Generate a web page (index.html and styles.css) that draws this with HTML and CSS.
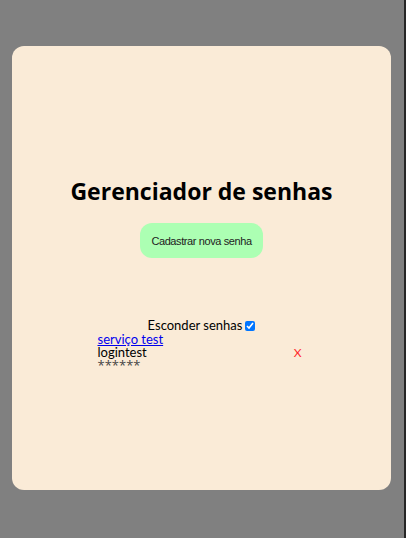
FILE: index.html
```html
<!DOCTYPE html>
<html lang="pt">
<head>
<meta charset="utf-8">
<title>Gerenciador de senhas</title>
<link rel="stylesheet" href="styles.css">
</head>
<body>
<main class="card">
  <h1 class="title">Gerenciador de senhas</h1>
  <button class="add-btn" type="button">Cadastrar nova senha</button>
  <label class="hide-row">Esconder senhas <input type="checkbox" class="hide-check" checked></label>
  <div class="entry">
    <div class="entry-info">
      <a class="entry-link" href="#">serviço test</a>
      <span class="entry-login">logintest</span>
      <span class="entry-pass">******</span>
    </div>
    <span class="entry-remove">X</span>
  </div>
</main>
</body>
</html>
```
FILE: styles.css
```css
html, body {
  margin: 0;
  height: 100%;
}
html {
  background: #808080;
  box-shadow: inset -2px 0 0 #262626;
}
body {
  display: flex;
  align-items: center;
  justify-content: center;
  padding-right: 2px;
  box-sizing: border-box;
  font-family: "Lato", "Open Sans", sans-serif;
}
.card {
  width: 379px;
  height: 444px;
  margin-right: 1px;
  margin-top: -2px;
  background: #faebd7;
  border-radius: 12px;
  display: flex;
  flex-direction: column;
  align-items: center;
  padding-top: 129px;
  box-sizing: border-box;
}
.title {
  margin: 0;
  font-family: "Open Sans", sans-serif;
  font-size: 23px;
  line-height: 32px;
  font-weight: 700;
  color: #000;
}
.add-btn {
  margin-top: 16px;
  width: 123px;
  height: 35px;
  border: none;
  border-radius: 12px;
  background: #acffb3;
  color: #222;
  font-family: "Liberation Sans", Arial, sans-serif;
  font-size: 11px;
  letter-spacing: -0.4px;
  padding: 0;
}
.hide-row {
  margin-top: 61px;
  display: flex;
  align-items: center;
  height: 13px;
  font-size: 13px;
  line-height: 13px;
  color: #000;
}
.hide-check {
  width: 10px;
  height: 10px;
  margin: 0 0 0 3px;
  accent-color: #0075ff;
}
.entry {
  margin-top: 1px;
  width: 208px;
  display: flex;
  justify-content: space-between;
  align-items: flex-start;
  font-size: 13px;
  line-height: 13px;
}
.entry-info {
  display: flex;
  flex-direction: column;
}
.entry-link {
  color: #0000ee;
}
.entry-login {
  color: #000;
}
.entry-pass {
  color: #444;
  font-family: "Open Sans", sans-serif;
  font-size: 13px;
  line-height: 12px;
}
.entry-remove {
  margin-top: 13px;
  margin-right: 4px;
  color: #ff2a2a;
  font-size: 12px;
}
```
